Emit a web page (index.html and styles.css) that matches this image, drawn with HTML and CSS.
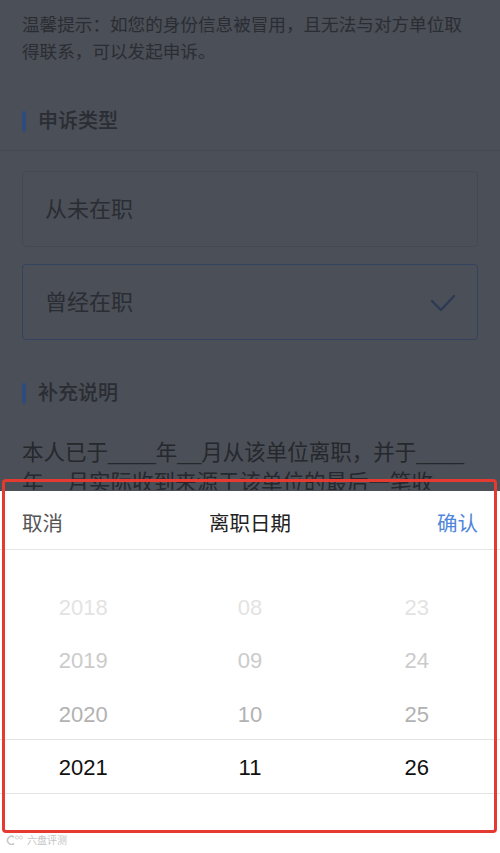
FILE: index.html
```html
<!DOCTYPE html>
<html lang="zh-CN">
<head>
<meta charset="utf-8">
<title>申诉</title>
<link rel="stylesheet" href="styles.css">
</head>
<body>
<div class="page">
  <p class="tip">温馨提示：如您的身份信息被冒用，且无法与对方单位取得联系，可以发起申诉。</p>

  <div class="sec-head sec-line"><span class="bar"></span><span>申诉类型</span></div>

  <div class="options">
    <div class="option">从未在职</div>
    <div class="option option-on">曾经在职
      <svg class="check" width="26" height="19" viewBox="0 0 26 19"><polyline points="2,8 11,17 24,3" fill="none" stroke="#2c3a55" stroke-width="2.4" stroke-linecap="round" stroke-linejoin="round"/></svg>
    </div>
  </div>

  <div class="sec-head sec-two"><span class="bar"></span><span>补充说明</span></div>

  <p class="para">本人已于____年__月从该单位离职，并于____年__月实际收到来源于该单位的最后一笔收入，此后未再从该单位取得任何收入。</p>
</div>

<div class="sheet">
  <div class="sheet-head">
    <span class="cancel">取消</span>
    <span class="title">离职日期</span>
    <span class="ok">确认</span>
  </div>
  <div class="wheel">
    <div class="indicator"></div>
    <div class="col">
      <div class="cell c3">2018</div>
      <div class="cell c2">2019</div>
      <div class="cell c1">2020</div>
      <div class="cell c0">2021</div>
    </div>
    <div class="col">
      <div class="cell c3">08</div>
      <div class="cell c2">09</div>
      <div class="cell c1">10</div>
      <div class="cell c0">11</div>
    </div>
    <div class="col">
      <div class="cell c3">23</div>
      <div class="cell c2">24</div>
      <div class="cell c1">25</div>
      <div class="cell c0">26</div>
    </div>
  </div>
  <div class="mark">
    <svg width="19" height="10" viewBox="0 0 19 10"><path d="M8 2.2A4 4 0 1 0 8 8.5" fill="none" stroke="#c9c9c9" stroke-width="1.6"/><circle cx="11" cy="2.5" r="1.6" fill="none" stroke="#d0d0d0" stroke-width="0.9"/><circle cx="15" cy="2.5" r="1.6" fill="none" stroke="#d0d0d0" stroke-width="0.9"/></svg>
    <span>六盘评测</span>
  </div>
</div>

<div class="annot"></div>
</body>
</html>
```

FILE: styles.css
```css
html, body {
  margin: 0;
  padding: 0;
}
body {
  width: 500px;
  height: 853px;
  overflow: hidden;
  background: #4b4f57;
  font-family: "Liberation Sans", "Noto Sans CJK SC", sans-serif;
  color: #26292f;
  position: relative;
}
.page {
  display: flex;
  flex-direction: column;
  height: 490px;
  overflow: hidden;
}
.tip {
  margin: 0;
  padding: 12px 22px 0;
  font-size: 17.6px;
  line-height: 27px;
  color: #2a2d33;
}
.sec-head {
  display: flex;
  align-items: center;
  gap: 12px;
  padding: 0 22px;
  font-size: 20px;
  line-height: 28px;
  font-weight: 500;
  color: #2a2d33;
}
.sec-line {
  padding-top: 41px;
  padding-bottom: 15px;
  border-bottom: 1px solid #454950;
}
.sec-two {
  margin-top: 39px;
}
.bar {
  width: 4px;
  height: 21px;
  border-radius: 2px;
  background: #2e4b7c;
}
.options {
  display: flex;
  flex-direction: column;
  gap: 17px;
  padding: 20px 22px 0;
}
.option {
  height: 76px;
  flex-shrink: 0;
  box-sizing: border-box;
  border: 1px solid #45494f;
  border-radius: 4px;
  display: flex;
  align-items: center;
  justify-content: space-between;
  padding: 0 22px 5px 22px;
  font-size: 22px;
  color: #2a2d33;
}
.option-on {
  border: 1.5px solid #33425e;
}
.check {
  display: block;
  margin-right: -1px;
  margin-bottom: -5px;
}
.para {
  margin: 31px 0 0;
  padding: 0 30px 0 22px;
  font-size: 21.5px;
  line-height: 30px;
  color: #25282d;
  flex-shrink: 0;
}

.sheet {
  position: fixed;
  left: 0;
  right: 0;
  bottom: 0;
  height: 362px;
  background: #ffffff;
  display: flex;
  flex-direction: column;
}
.sheet-head {
  height: 59px;
  box-sizing: border-box;
  padding: 4px 22px 0;
  display: flex;
  align-items: center;
  justify-content: space-between;
  border-bottom: 1px solid #e6e6e6;
  font-size: 20.5px;
}
.cancel { color: #555555; }
.title { color: #222222; }
.ok { color: #4f86db; }
.wheel {
  position: relative;
  display: grid;
  grid-template-columns: 1fr 1fr 1fr;
  padding-top: 31px;
}
.indicator {
  position: absolute;
  left: 0;
  right: 0;
  top: 189px;
  height: 52.5px;
  border-top: 1px solid #e4e4e4;
  border-bottom: 1px solid #e4e4e4;
}
.col {
  display: flex;
  flex-direction: column;
}
.cell {
  height: 53.5px;
  display: flex;
  align-items: center;
  justify-content: center;
  font-size: 22px;
}
.c3 { color: #e3e3e3; }
.c2 { color: #cbcbcb; }
.c1 { color: #b2b2b2; }
.c0 { color: #111111; }
.mark {
  position: absolute;
  left: 6px;
  bottom: 6px;
  display: flex;
  align-items: center;
  gap: 2px;
  font-size: 10px;
  color: #c4c4c4;
}
.annot {
  position: absolute;
  left: 2px;
  top: 479px;
  width: 495px;
  height: 354px;
  box-sizing: border-box;
  border: 3px solid #e53a31;
  border-radius: 4px;
}
```
